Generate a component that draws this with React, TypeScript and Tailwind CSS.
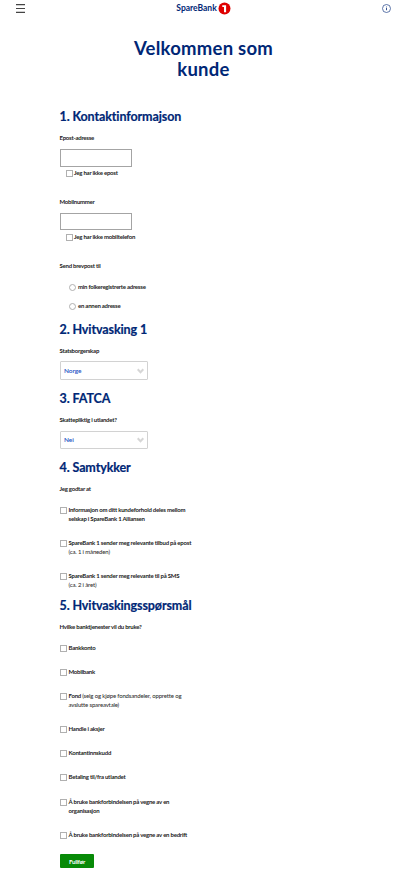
import type { ReactNode } from "react";

function Heading({ className, children }: { className: string; children: ReactNode }) {
  return (
    <h2 className={"-ml-[0.5px] flex h-5 items-center whitespace-nowrap text-[12.5px] font-bold tracking-[-0.1px] text-[#002776] [-webkit-text-stroke:0.2px_#002776] " + className}>
      <span>{children}</span>
    </h2>
  );
}

function Label({ className, children }: { className: string; children: ReactNode }) {
  return (
    <div className={"-ml-[0.5px] h-[10px] whitespace-nowrap text-[6px] leading-[10px] font-bold tracking-[-0.24px] text-[#1c1c1c] " + className}>
      <span>{children}</span>
    </div>
  );
}

function Check({ className, children }: { className: string; children: ReactNode }) {
  return (
    <label className={"flex items-start whitespace-nowrap text-[6px] leading-[9px] font-bold tracking-[-0.22px] text-[#1c1c1c] " + className}>
      <span className="mt-[1px] mr-[1.5px] size-[7px] shrink-0 border border-[#b0b0b0] bg-white" />
      <span className="-mt-[0.6px] mb-[0.6px]">{children}</span>
    </label>
  );
}

function Radio({ className, children }: { className: string; children: ReactNode }) {
  return (
    <label className={"ml-[9px] flex h-[10px] items-center whitespace-nowrap text-[6px] leading-[10px] font-bold tracking-[-0.24px] text-[#1c1c1c] " + className}>
      <span className="mr-[2px] size-[7px] shrink-0 rounded-full border border-[#b0b0b0]" />
      <span>{children}</span>
    </label>
  );
}

function Select({ className, children }: { className: string; children: ReactNode }) {
  return (
    <div className={"flex w-[88px] items-center justify-between rounded-[1px] border border-[#d2d2d2] pr-[3px] pl-[3px] text-[6.5px] font-semibold tracking-[-0.1px] text-[#1c52c4] " + className}>
      <span>{children}</span>
      <svg width="7" height="6" viewBox="0 0 7 6" fill="none" stroke="#d6d6d6" strokeWidth="2">
        <path d="M.7 1.3 3.5 4.2 6.3 1.3" />
      </svg>
    </div>
  );
}

function Note({ children }: { children: ReactNode }) {
  return <span className="font-medium tracking-[-0.16px] text-[#333]">{children}</span>;
}

export default function App() {
  return (
    <div className="h-[873px] w-full overflow-hidden bg-white font-[Lato,'Noto_Sans',sans-serif] [font-variant-ligatures:none]">
      <header className="flex h-[17px] items-center justify-between pr-[20px] pl-[16px]">
        <svg width="9" height="9" viewBox="0 0 9 9" stroke="#444" strokeWidth="1.1">
          <path d="M0 .6h9M0 4.5h9M0 8.4h9" />
        </svg>
        <div className="flex items-center text-[8.5px] font-bold text-[#002776]">
          <span>SpareBank</span>
          <svg className="-mt-px ml-[1px]" width="13" height="13" viewBox="0 0 13 13">
            <circle cx="6.5" cy="6.5" r="6" fill="#df0000" />
            <path d="M4.3 3.2h3.8v7H6V5H4.3z" fill="#fff" />
          </svg>
        </div>
        <svg width="9" height="9" viewBox="0 0 9 9" fill="none" stroke="#355394">
          <circle cx="4.5" cy="4.5" r="4" strokeWidth=".8" />
          <path d="M4.5 2.6v.8M4.5 4v2.2" />
        </svg>
      </header>
      <h1 className="mt-[21px] flex flex-col items-center pr-[4px] text-[18.5px] leading-[21px] font-bold tracking-[0.25px] text-[#002776]">
        <span className="leading-[21px]">Velkommen som</span>
        <span className="leading-[21px]">kunde</span>
      </h1>
      <main className="pl-[60px]">
        <Heading className="mt-[27px]">1. Kontaktinformajson</Heading>
        <Label className="mt-[6px]">Epost-adresse</Label>
        <div className="mt-[6px] h-[18px] w-[72px] border border-[#a4a4a4]" />
        <Check className="mt-[2px] ml-[5.5px]">Jeg har ikke epost</Check>
        <Label className="mt-[19px]">Mobilnummer</Label>
        <div className="mt-[6px] h-[17px] w-[72px] border border-[#a4a4a4]" />
        <Check className="mt-[3px] ml-[5.5px]">Jeg har ikke mobiltelefon</Check>
        <Label className="mt-[19px]">Send brevpost til</Label>
        <Radio className="mt-[11px]">min folkeregistrerte adresse</Radio>
        <Radio className="mt-[9px]">en annen adresse</Radio>

        <Heading className="mt-[9px]">2. Hvitvasking 1</Heading>
        <Label className="mt-[6px]">Statsborgerskap</Label>
        <Select className="mt-[5px] h-[19px]">Norge</Select>

        <Heading className="mt-[9px]">3. FATCA</Heading>
        <Label className="mt-[6px]">Skattepliktig i utlandet?</Label>
        <Select className="mt-[6px] h-[18px]">Nei</Select>

        <Heading className="mt-[9px]">4. Samtykker</Heading>
        <Label className="mt-[6px]">Jeg godtar at</Label>
        <Check className="mt-[12px]">
          Informasjon om ditt kundeforhold deles mellom
          <br />
          selskap i SpareBank 1 Alliansen
        </Check>
        <Check className="mt-[15px]">
          SpareBank 1 sender meg relevante tilbud på epost
          <br />
          <Note>(ca. 1 i måneden)</Note>
        </Check>
        <Check className="mt-[15px]">
          SpareBank 1 sender meg relevante til på SMS
          <br />
          <Note>(ca. 2 i året)</Note>
        </Check>

        <Heading className="mt-[6px]">5. Hvitvaskingsspørsmål</Heading>
        <Label className="mt-[6px]">Hvilke banktjenester vil du bruke?</Label>
        <Check className="mt-[12px]">Bankkonto</Check>
        <Check className="mt-[15px]">Mobilbank</Check>
        <Check className="mt-[15px]">
          Fond <Note>(selg og kjøpe fondsandeler, opprette og</Note>
          <br />
          <Note>avslutte spareavtale)</Note>
        </Check>
        <Check className="mt-[15px]">Handle i aksjer</Check>
        <Check className="mt-[15px]">Kontantinnskudd</Check>
        <Check className="mt-[15px]">Betaling til/fra utlandet</Check>
        <Check className="mt-[16px]">
          Å bruke bankforbindelsen på vegne av en
          <br />
          organisasjon
        </Check>
        <Check className="mt-[15px]">Å bruke bankforbindelsen på vegne av en bedrift</Check>
        <button className="mt-[14px] flex h-[14px] w-[34px] items-center justify-center rounded-[1px] bg-[#078a07] text-[6px] font-bold tracking-[-0.2px] text-white">
          Fullfør
        </button>
      </main>
    </div>
  );
}
